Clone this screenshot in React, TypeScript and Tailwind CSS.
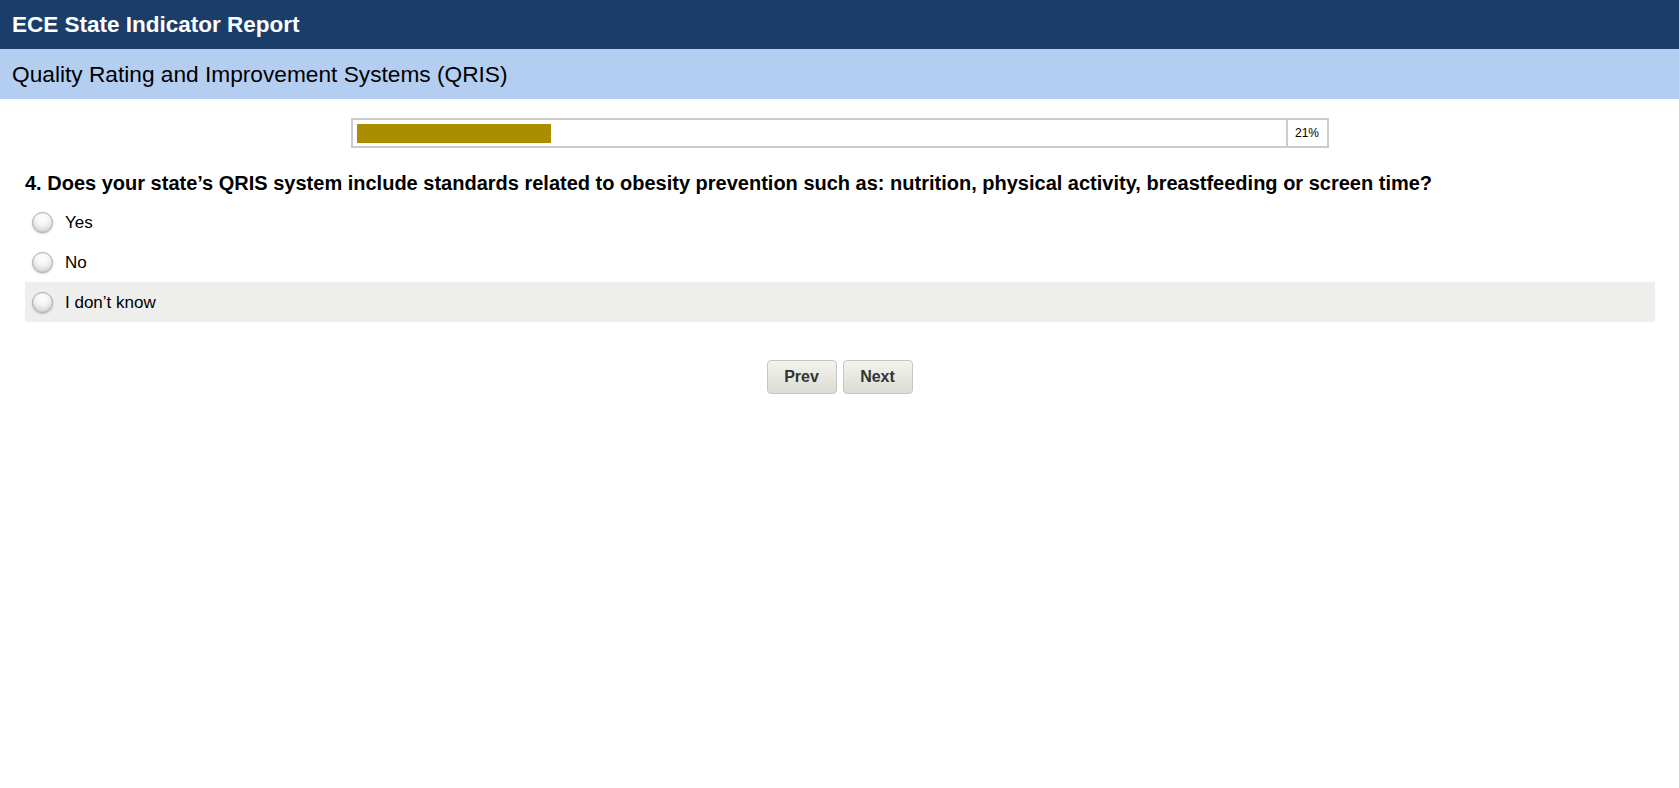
import { useState } from 'react';

const options = ['Yes', 'No', 'I don’t know'];

function Radio({ checked }: { checked: boolean }) {
  return (
    <span className="relative flex h-[21px] w-[21px] shrink-0 items-center justify-center rounded-full border border-[#a9a9a9] bg-[radial-gradient(circle_at_50%_30%,#ffffff_0%,#f4f4f4_40%,#cfcfcf_85%,#bdbdbd_100%)] shadow-[0_1px_2px_rgba(0,0,0,0.2)]">
      {checked && <span className="h-[9px] w-[9px] rounded-full bg-[#333]" />}
    </span>
  );
}

export default function App() {
  const [selected, setSelected] = useState<string | null>(null);
  const [hover, setHover] = useState<string | null>('I don’t know');
  const percent = 21;

  return (
    <div className="min-h-screen bg-white font-['Liberation_Sans',Arial,sans-serif] text-black">
      {/* title bars */}
      <header className="flex h-[49px] items-center bg-[#1b3d6a] px-3">
        <h1 className="text-[22.5px] font-bold text-white">ECE State Indicator Report</h1>
      </header>
      <div className="flex h-[50px] items-center bg-[#b4cef2] px-3">
        <h2 className="text-[22.7px]">Quality Rating and Improvement Systems (QRIS)</h2>
      </div>

      {/* progress */}
      <div className="mx-auto mt-[19px] flex h-[30px] w-[978px] border-2 border-[#cccccc]">
        <div className="flex-1 pl-1 pt-1 pr-1">
          <div className="h-[19px] bg-[#ab8e00]" style={{ width: `${percent}%` }} />
        </div>
        <div className="flex w-[41px] items-center justify-center border-l-2 border-[#cccccc] text-[12px]">
          {percent}%
        </div>
      </div>

      {/* question */}
      <div className="mx-[24px] mt-[23px]">
        <p className="h-[24px] pl-px text-[20px] font-bold leading-[24px]">
          4. Does your state’s QRIS system include standards related to obesity prevention such as: nutrition, physical activity, breastfeeding or screen time?
        </p>
        <div className="mt-[7px] ml-px">
          {options.map((o) => (
            <label
              key={o}
              onMouseEnter={() => setHover(o)}
              onClick={() => setSelected(o)}
              className={`flex h-[40px] cursor-pointer items-center gap-3 pl-[7px] text-[17px] ${hover === o ? 'bg-[#eeeeec]' : ''}`}
            >
              <Radio checked={selected === o} />
              <span className="mt-[2px]">{o}</span>
            </label>
          ))}
        </div>
      </div>

      {/* nav */}
      <div className="mt-[38px] flex justify-center gap-[6px]">
        {['Prev', 'Next'].map((b) => (
          <button
            key={b}
            className="h-[34px] w-[70px] rounded-[4px] border border-[#c6c6c0] bg-[linear-gradient(#f3f3ee,#dcdcd4)] text-[16px] font-bold text-[#333]"
          >
            {b}
          </button>
        ))}
      </div>
    </div>
  );
}
